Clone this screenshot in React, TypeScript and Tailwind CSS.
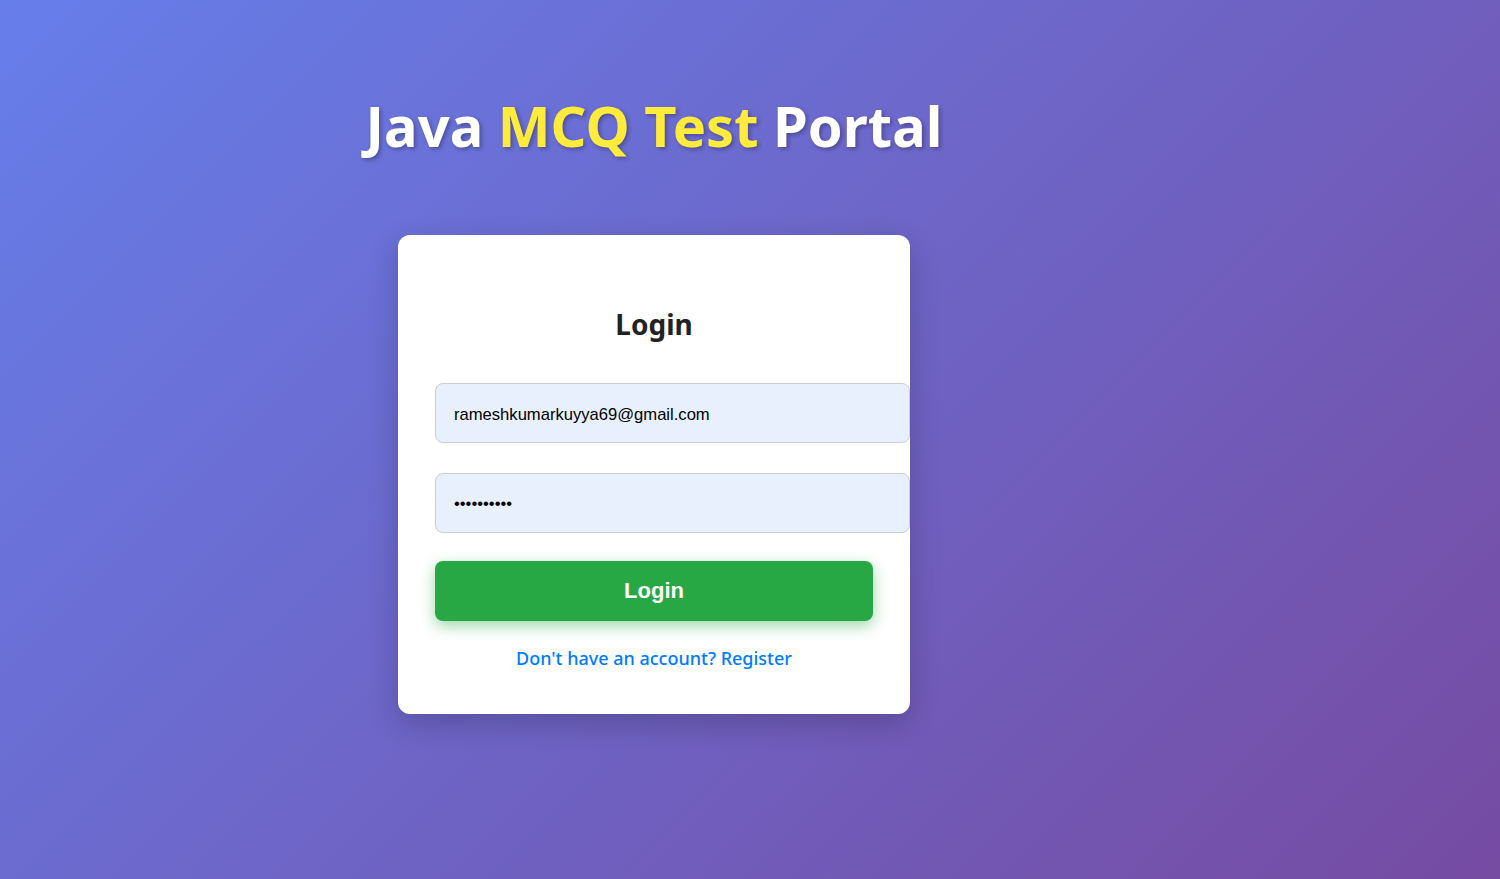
export default function App() {
  return (
    <div className="min-h-screen w-full bg-[linear-gradient(135deg,#667eea_0%,#764ba2_100%)] font-['Noto_Sans','Open_Sans',sans-serif]">
      <div className="w-[1308px] flex flex-col items-center pt-[81px]">
        <h1 className="text-[56px] leading-[88px] font-bold text-white [text-shadow:2px_2px_4px_rgba(0,0,0,0.3)]">
          Java <span className="text-[#ffeb3b]">MCQ Test</span> Portal
        </h1>

        <div className="mt-[66px] w-[512px] bg-white rounded-xl shadow-[0_10px_30px_rgba(0,0,0,0.2)] px-[37px] pt-[67px] pb-[43px]">
          <h2 className="text-center text-[28px] leading-[44px] font-bold text-[#222]">Login</h2>

          <form className="mt-[37px]" onSubmit={(e) => e.preventDefault()}>
            <input
              type="email"
              defaultValue="rameshkumarkuyya69@gmail.com"
              className="box-content w-full h-[20px] pt-[21px] pb-[17px] pl-[18px] pr-[17px] border border-[#ccc] rounded-lg bg-[#e8f0fe] text-[16.6px] text-black font-['Liberation_Sans',Arial,sans-serif] outline-none"
            />
            <input
              type="password"
              defaultValue="password12"
              className="box-content w-full h-[20px] pt-[20px] pb-[18px] pl-[18px] pr-[17px] mt-[30px] border border-[#ccc] rounded-lg bg-[#e8f0fe] text-[16.6px] text-black font-['Liberation_Sans',Arial,sans-serif] outline-none"
            />
            <button
              type="submit"
              className="mt-[28px] w-full h-[60px] pb-[2px] rounded-lg bg-[#28a745] text-white text-[22px] font-bold font-['Liberation_Sans',Arial,sans-serif] shadow-[0_5px_15px_rgba(40,167,69,0.45)]"
            >
              Login
            </button>
          </form>

          <p className="mt-[24px] text-center text-[18px] leading-[26px] font-medium text-[#007bff]">
            Don't have an account? Register
          </p>
        </div>
      </div>
    </div>
  );
}
